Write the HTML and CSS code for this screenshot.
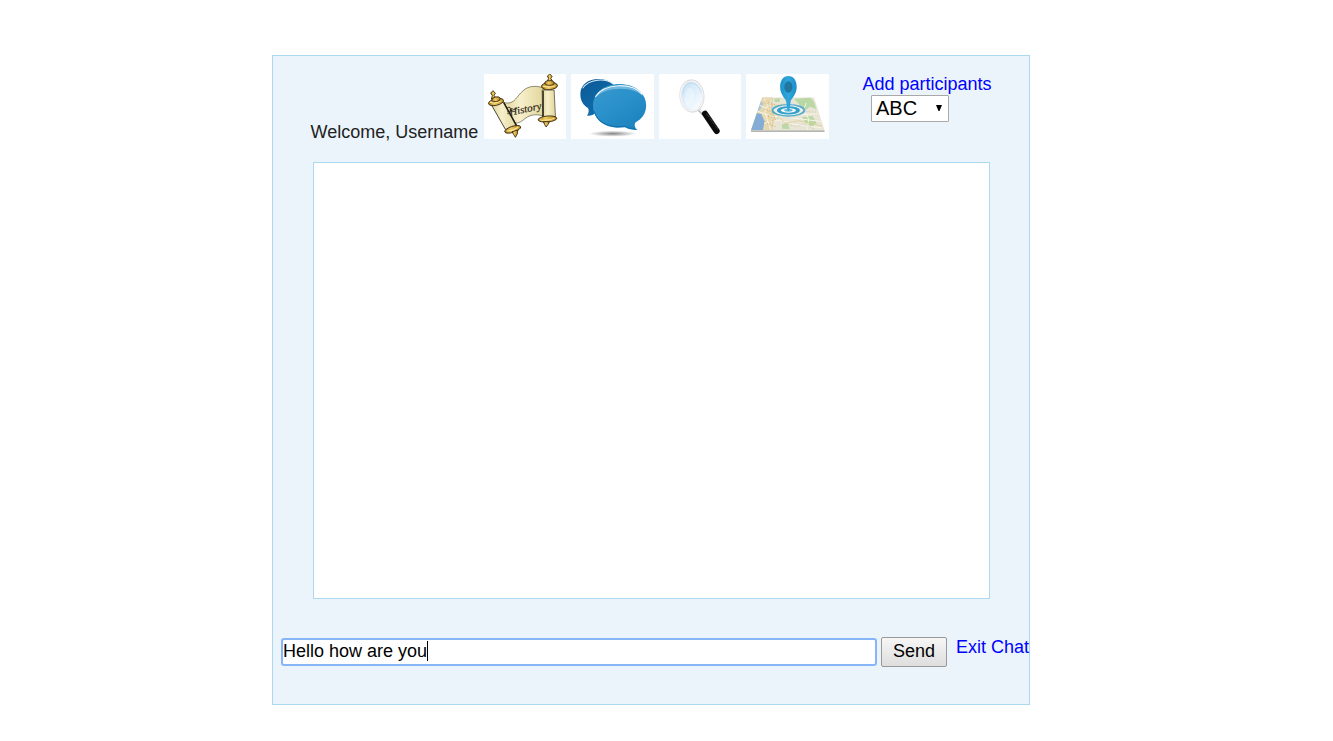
FILE: index.html
```html
<!DOCTYPE html>
<html lang="en">
<head>
<meta charset="utf-8">
<title>Chat</title>
<link rel="stylesheet" href="styles.css">
</head>
<body>
<main class="wrapper">
  <header class="menu">
    <p class="welcome">Welcome, Username</p>
    <nav class="icons">
      <svg class="icon" viewBox="12 18 247 195" preserveAspectRatio="none">
        <defs>
          <linearGradient id="paper" x1="0" x2="1"><stop offset="0" stop-color="#e2d79c"/><stop offset=".4" stop-color="#f6efcb"/><stop offset="1" stop-color="#e2d69a"/></linearGradient>
          <linearGradient id="gold" x1="0" x2="1"><stop offset="0" stop-color="#a87a1c"/><stop offset=".4" stop-color="#f0cb62"/><stop offset="1" stop-color="#b5801a"/></linearGradient>
        </defs>
        <path d="M72 104C100 110 106 92 122 75C140 55 160 50 192 60L188 144C165 136 146 142 132 154C116 168 106 166 96 163Z" fill="url(#paper)" stroke="#5d573f" stroke-width="2"/>
        <path d="M186 66L222 66L226 149Q205 156 188 149Z" fill="url(#paper)" stroke="#3b3626" stroke-width="2"/>
        <path d="M189 68V148" stroke="#1d1a12" stroke-width="4"/>
        <path d="M35 112L70 101L111 174Q94 188 76 184Z" fill="url(#paper)" stroke="#29251a" stroke-width="2.5"/>
        <path d="M71 104L109 173" stroke="#1d1a12" stroke-width="4"/>
        <g fill="url(#gold)" stroke="#30240d" stroke-width="2.5">
          <path d="M39 68L46 76L42 82L50 93H34L37 83L32 75Z"/>
          <ellipse cx="48" cy="102" rx="23" ry="10" transform="rotate(-13 48 102)"/>
          <ellipse cx="48" cy="94" rx="13" ry="7" transform="rotate(-13 48 94)"/>
          <ellipse cx="98" cy="184" rx="25" ry="9" transform="rotate(-18 98 184)"/>
          <path d="M96 191L113 186L112 197L106 208L101 200Z"/>
          <path d="M209 18L216 25L212 31L217 40H202L205 31L202 24Z"/>
          <ellipse cx="208" cy="54" rx="24" ry="11" transform="rotate(-4 208 54)"/>
          <ellipse cx="208" cy="45" rx="14" ry="7"/>
          <ellipse cx="202" cy="153" rx="28" ry="9" transform="rotate(-5 202 153)"/>
          <path d="M190 161H208L204 169L198 177L193 169Z"/>
        </g>
        <path d="M30 102Q45 109 65 98M188 54Q205 61 226 53M80 189Q101 188 115 177M179 155Q199 160 223 151" fill="none" stroke="#ffe996" stroke-width="3"/>
        <text class="scroll-label" transform="translate(90 143) rotate(-12)" textLength="98" lengthAdjust="spacingAndGlyphs">History</text>
        <path d="M81 120Q94 112 91 130Q89 141 82 137M81 132L112 121" fill="none" stroke="#282014" stroke-width="2.5"/>
      </svg>
      <svg class="icon" viewBox="8 18 247 195" preserveAspectRatio="none">
        <defs>
          <linearGradient id="back" x1="0" y1="0" x2=".7" y2="1"><stop offset="0" stop-color="#0b5795"/><stop offset="1" stop-color="#1272b0"/></linearGradient>
          <linearGradient id="front" x1="0" y1="0" x2=".8" y2="1"><stop offset="0" stop-color="#3b97cc"/><stop offset=".45" stop-color="#2b92cb"/><stop offset="1" stop-color="#1c82bd"/></linearGradient>
          <radialGradient id="shadow"><stop offset="0" stop-color="#858585"/><stop offset=".5" stop-color="#c4c4c4"/><stop offset="1" stop-color="#fff"/></radialGradient>
        </defs>
        <ellipse cx="133" cy="197" rx="71" ry="9" fill="url(#shadow)"/>
        <path d="M91 33C59 33 36 50 36 78C36 98 45 112 59 120Q64 132 56 143Q72 145 81 136H91C126 136 147 112 147 82C147 53 124 33 91 33Z" fill="url(#back)"/>
        <path d="M43 61C61 32 111 29 135 48" fill="none" stroke="#d8edf8" stroke-width="3"/>
        <path d="M153 48C107 48 74 75 74 113C74 153 109 179 151 179L169 178Q184 188 207 186Q195 176 200 164C222 153 233 136 233 112C233 75 199 48 153 48Z" fill="url(#front)"/>
        <path d="M79 91C96 44 198 34 226 86C194 53 110 54 79 91Z" fill="#6fb6de"/>
        <path d="M81 86C106 46 191 42 221 79" fill="none" stroke="#fff" stroke-width="3"/>
        <path d="M78 130C88 167 124 179 170 175Q187 183 199 182" fill="none" stroke="#1271aa" stroke-width="3"/>
      </svg>
      <svg class="icon" viewBox="9 18 246 195" preserveAspectRatio="none">
        <defs>
          <linearGradient id="lens" x1="0" y1="0" x2=".6" y2="1"><stop offset="0" stop-color="#c0dff4"/><stop offset=".55" stop-color="#e0effb"/><stop offset="1" stop-color="#f7fbff"/></linearGradient>
          <linearGradient id="rim" x1="0" x2="1"><stop offset="0" stop-color="#e2e2e4"/><stop offset=".5" stop-color="#cfd1d5"/><stop offset="1" stop-color="#d6d8dc"/></linearGradient>
        </defs>
        <path d="M127 124L142 139" stroke="#b8bbc0" stroke-width="10"/>
        <path d="M128 122L143 137" stroke="#f8f8f8" stroke-width="4"/>
        <path d="M146 137L181 189" stroke="#0b0b0b" stroke-width="18" stroke-linecap="round"/>
        <path d="M151 137L186 184" stroke="#555" stroke-width="3" stroke-dasharray="3 2"/>
        <ellipse cx="107" cy="84" rx="34" ry="46" fill="url(#lens)" stroke="url(#rim)" stroke-width="7" transform="rotate(-5 107 84)"/>
        <ellipse cx="107" cy="84" rx="33" ry="45" fill="none" stroke="#f6f6f7" stroke-width="4" transform="rotate(-5 107 84)"/>
        <path d="M80 80C81 37 122 32 135 74" fill="none" stroke="#b4d7ef" stroke-width="2"/>
        <ellipse cx="99" cy="86" rx="14" ry="27" fill="#fff" opacity=".3" transform="rotate(8 99 86)"/>
      </svg>
      <svg class="icon" viewBox="9 18 249 195" preserveAspectRatio="none">
        <defs>
          <linearGradient id="pin" x1="0" x2="1"><stop offset="0" stop-color="#1b91cb"/><stop offset=".5" stop-color="#30a6dc"/><stop offset="1" stop-color="#1b8dc8"/></linearGradient>
          <clipPath id="map"><path d="M58 88H214L246 187H24Z"/></clipPath>
        </defs>
        <path d="M24 187H246V192H24Z" fill="#b5b5af"/>
        <g clip-path="url(#map)">
          <path d="M20 84H250V190H20Z" fill="#e8e5d6"/>
          <path d="M48 86H91L76 112L97 144L83 187H20V140Z" fill="#e6d8af"/>
          <path d="M38 135L55 138L65 160L60 187H20Z" fill="#84acd4"/>
          <path d="M52 96L61 108L51 126L42 131Z" fill="#a6c6de"/>
          <path d="M154 92L205 89L216 105L221 123L202 116L190 125L168 108ZM178 148L209 144L222 164L207 178L190 165ZM94 92L112 90L110 103L96 102ZM118 169L134 165L141 183L118 182Z" fill="#bad8a5"/>
          <path d="M50 112L86 127L116 126L150 150L242 161M65 92L74 113L66 133L84 187M39 128L89 146L144 142L226 137M64 166L112 156L155 169L238 180M191 105L183 124L198 153L194 187" fill="none" stroke="#f8f4e2" stroke-width="3"/>
          <path d="M59 105L102 112L127 108M61 122L100 138L128 166L169 158L239 174M90 90L86 117L94 149L86 187" fill="none" stroke="#e0c783" stroke-width="2"/>
          <path d="M68 101L96 109L73 124L104 130L73 145L105 151L72 168L102 177" fill="none" stroke="#cfa872" stroke-width="3" stroke-dasharray="3 6"/>
          <path d="M135 169L164 176L183 168L215 183M154 109L172 130L220 132" fill="none" stroke="#c5c0b0" stroke-width="2" stroke-dasharray="4 5"/>
        </g>
        <g fill="none" stroke="#329fca">
          <ellipse cx="137" cy="127" rx="48" ry="16" stroke-width="6" opacity=".8"/>
          <ellipse cx="137" cy="127" rx="40" ry="13" stroke="#e7f2f2" stroke-width="4"/>
          <ellipse cx="137" cy="127" rx="32" ry="10" fill="#329fca" stroke-width="5"/>
          <ellipse cx="137" cy="127" rx="23" ry="7" fill="#f4fafa" stroke="none"/>
          <ellipse cx="137" cy="127" rx="13" ry="4" fill="#62b8d9" stroke="none"/>
        </g>
        <path d="M137 24C121 24 112 38 112 57C112 75 123 88 130 98L134 127Q137 130 140 127L144 98C151 88 162 75 162 57C162 38 153 24 137 24Z" fill="url(#pin)"/>
        <ellipse cx="137" cy="57" rx="11" ry="16" fill="#24779c" stroke="#176f9c" stroke-width="2"/>
      </svg>
    </nav>
    <div class="participants">
      <a class="link">Add participants</a>
      <div class="select"><span>ABC</span><svg class="arrow" viewBox="0 0 6 6"><path d="M0 0H6L3.5 6H2.5Z"/></svg></div>
    </div>
  </header>
  <section class="chatbox"></section>
  <form class="composer">
    <div class="message">Hello how are you<span class="caret"></span></div>
    <button class="send" type="button">Send</button>
    <a class="link exit">Exit Chat</a>
  </form>
</main>
</body>
</html>
```
FILE: styles.css
```css
* { box-sizing: border-box; }
body {
  margin: 0;
  background: #fff;
  color: #222;
  font: 18px/21px "Liberation Sans", Arial, sans-serif;
}
.wrapper {
  width: 758px;
  height: 650px;
  margin: 55px 0 0 272px;
  border: 1px solid #acd8f0;
  background: #ebf4fb;
}
.menu {
  display: flex;
  height: 106px;
  padding: 18px 0 0 37.5px;
}
.welcome { width: 173.1px; margin: 48px 0 0; white-space: nowrap; }
.icons { display: flex; gap: 5px; }
.icon { display: block; width: 82.5px; height: 65px; background: #fff; }
.scroll-label { font: italic 31px "Liberation Serif", serif; fill: #282014; stroke: #282014; stroke-width: .5px; }
.participants { margin-left: 33.9px; white-space: nowrap; }
.link { display: block; color: #00f; }
.select {
  display: flex;
  align-items: center;
  justify-content: space-between;
  width: 78px;
  height: 27px;
  margin: 0 0 0 8.5px;
  padding: 0 6px 0 4px;
  border: 1px solid #a9a9a9;
  border-radius: 1px;
  background: #fff;
  color: #000;
  font-size: 20px;
}
.arrow { width: 6px; height: 6px; margin-bottom: 2px; }
.chatbox {
  width: 677px;
  height: 437px;
  margin-left: 40px;
  border: 1px solid #acd8f0;
  background: #fff;
}
.composer { display: flex; padding: 38px 0 0 8px; }
.message {
  display: flex;
  align-items: center;
  width: 596px;
  height: 28px;
  margin-top: 1px;
  padding: 0 0 2px;
  border: 2px solid #86b6f8;
  border-radius: 3px;
  background: #fff;
  color: #000;
}
.caret { width: 1px; height: 20px; background: #000; }
.send {
  width: 66px;
  height: 30px;
  margin-left: 4px;
  padding: 0 0 2px;
  border: 1px solid #999;
  border-radius: 2px;
  background: linear-gradient(#f6f6f6, #dedede);
  color: #000;
  font: inherit;
}
.exit { margin-left: 9px; white-space: nowrap; }
```
